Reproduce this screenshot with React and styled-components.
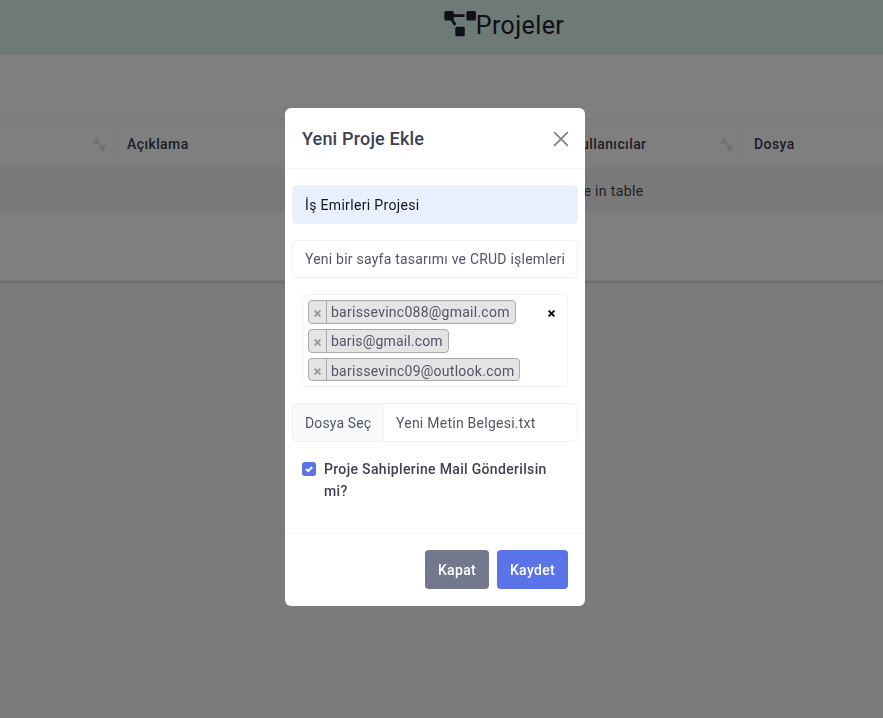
import React from 'react';
import styled, { createGlobalStyle } from 'styled-components';

const GlobalStyle = createGlobalStyle`
  *, *::before, *::after { box-sizing: border-box; }
  body {
    margin: 0;
    overflow: hidden;
    background: #f5f7fb;
    color: #3e4152;
    font: 400 14px/21px Roboto, "Noto Sans", sans-serif;
    letter-spacing: 0.3px;
  }
`;

const Page = styled.div`
  height: 718px;
  overflow: hidden;
`;

const TopBar = styled.header`
  display: flex;
  justify-content: center;
  height: 55px;
  padding: 10px 0 0 125px;
  background: #dbf5ea;
  color: #212130;
`;

const Brand = styled.h1`
  display: flex;
  align-items: flex-start;
  margin: 0;
  font-size: 25px;
  font-weight: 400;
  line-height: 31px;
  letter-spacing: 0.4px;
  white-space: nowrap;
  svg { display: block; margin-top: 1px; }
`;

const Card = styled.section`
  height: 226px;
  padding-top: 64px;
  background: #fff;
  border-bottom: 1px solid #eceef2;
  box-shadow: 0 3px 3px -1px rgba(40, 45, 60, 0.2);
`;

const TableHead = styled.div`
  display: grid;
  grid-template-columns: 115px 445px 182px 1fr;
  height: 48px;
  border-top: 2px solid #f5f5f5;
`;

const HeadCell = styled.div`
  display: flex;
  align-items: center;
  justify-content: space-between;
  padding: 1px 7px 0 12px;
  border-right: ${(p) => (p.$last ? 'none' : '1px solid #f5f5f5')};
  color: #3b3c50;
  font-weight: 500;
  letter-spacing: 0.4px;
`;

const SortMark = styled.svg`
  display: block;
  margin-left: auto;
`;

const EmptyRow = styled.div`
  display: flex;
  align-items: center;
  justify-content: center;
  height: 46px;
  padding: 3px 0 0 238px;
  background: #f2f2f2;
  letter-spacing: 0.36px;
`;

const Overlay = styled.div`
  position: fixed;
  inset: 0;
  display: flex;
  justify-content: center;
  align-items: flex-start;
  padding: 108px 13px 0 0;
  background: rgba(0, 0, 0, 0.5);
`;

const Dialog = styled.div`
  display: flex;
  flex-direction: column;
  width: 300px;
  height: 498px;
  background: #fff;
  border-radius: 6px;
`;

const DialogHeader = styled.div`
  display: flex;
  align-items: center;
  justify-content: space-between;
  height: 61px;
  padding: 2px 16px 0 17px;
  border-bottom: 1px solid #f4f4f6;
`;

const DialogTitle = styled.h2`
  margin: 0;
  font-size: 18px;
  line-height: 24px;
  font-weight: 500;
  letter-spacing: 0.18px;
`;

const CloseButton = styled.button`
  display: flex;
  padding: 0;
  border: 0;
  background: none;
`;

const DialogBody = styled.div`
  display: flex;
  flex: 1;
  flex-direction: column;
  gap: 16px;
  padding: 16px 7px 0;
`;

const Field = styled.div`
  display: flex;
  align-items: center;
  height: ${(p) => p.$height}px;
  padding: ${(p) => (p.$filled ? '1px' : '0')} 0 0 12px;
  border: 1px solid #f2f2f5;
  border-radius: 4px;
  background: ${(p) => (p.$filled ? '#e8f0fe' : '#fff')};
  color: ${(p) => (p.$filled ? '#15161c' : '#525568')};
  letter-spacing: ${(p) => (p.$filled ? 0.33 : 0.22)}px;
  white-space: nowrap;
`;

const MultiSelect = styled.div`
  display: flex;
  justify-content: space-between;
  height: 93px;
  margin: 0 10px;
  padding: 5px 12px 5px 5px;
  border: 1px solid #f2f2f5;
  border-radius: 4px;
`;

const TagList = styled.div`
  display: flex;
  flex-direction: column;
  align-items: flex-start;
  gap: 5px;
`;

const Tag = styled.div`
  display: flex;
  width: ${(p) => p.$width}px;
  height: 24px;
  border: 1px solid #aaa;
  border-radius: 4px;
  background: #e4e4e4;
  color: #525568;
  line-height: 23px;
  letter-spacing: ${(p) => p.$tracking}px;
  overflow: hidden;
  &:last-child { height: 23px; line-height: 24px; }
`;

const TagRemove = styled.span`
  display: flex;
  align-items: center;
  justify-content: center;
  width: 18px;
  margin-right: 4px;
  padding-top: 3px;
  border-right: 1px solid #aaa;
`;

const ClearAll = styled.span`
  margin-top: 10px;
  svg { display: block; }
`;

const FileField = styled.div`
  display: flex;
  height: 39px;
  border: 1px solid #f2f2f5;
  border-radius: 4px;
  overflow: hidden;
  line-height: 39px;
  color: #525568;
`;

const FileButton = styled.span`
  width: 91px;
  padding-left: 12px;
  background: #f8f9fb;
  border-right: 1px solid #f2f2f5;
  letter-spacing: 0.12px;
`;

const FileName = styled.span`
  padding-left: 12px;
  letter-spacing: 0.25px;
`;

const CheckRow = styled.label`
  display: flex;
  gap: 8px;
  padding-left: 10px;
  font-weight: 500;
  line-height: 22px;
  letter-spacing: 0.33px;
`;

const CheckBox = styled.span`
  flex: none;
  width: 14px;
  height: 14px;
  margin-top: 4px;
  border-radius: 3px;
  background: #5b73e8;
  svg { display: block; }
`;

const CheckText = styled.span`
  width: 232px;
`;

const DialogFooter = styled.div`
  display: flex;
  justify-content: flex-end;
  gap: 8px;
  height: 73px;
  padding: 16px 17px;
  border-top: 1px solid #f4f4f6;
`;

const Button = styled.button`
  width: ${(p) => (p.$primary ? 71 : 64)}px;
  height: 39px;
  padding: 2px 0 0;
  border: 0;
  border-radius: 4px;
  background: ${(p) => (p.$primary ? '#5b73e8' : '#74788d')};
  color: #fff;
  font: 500 14px/21px Roboto, sans-serif;
  letter-spacing: 0.35px;
`;

const DiagramIcon = () => (
  <svg width="32" height="26" viewBox="0 0 32 26" fill="currentColor">
    <rect x="0.3" y="0" width="9.5" height="9.5" rx="1.5" />
    <rect x="22.4" y="0" width="9.5" height="9.5" rx="1.5" />
    <rect x="11.3" y="15.8" width="9.5" height="9.5" rx="1.5" />
    <path d="M7 4.7h13.6M6.5 6.5l4.8 7.6" fill="none" stroke="currentColor" strokeWidth="2.8" />
  </svg>
);

const Sort = () => (
  <SortMark width="14" height="17" viewBox="0 0 14 17" fill="#e4e4e5">
    <path d="M0 8 4 0l4 8z" />
    <path d="M5.6 9h8.2l-4.1 7.6z" />
  </SortMark>
);

const Cross = ({ color }) => (
  <svg width="7" height="7" viewBox="0 0 7 7" fill="none" stroke={color} strokeWidth="1.8">
    <path d="M.6.6l5.8 5.8M6.4.6.6 6.4" />
  </svg>
);

const people = [
  { mail: 'barissevinc088@gmail.com', width: 208, tracking: 0.25 },
  { mail: 'baris@gmail.com', width: 141, tracking: 0.17 },
  { mail: 'barissevinc09@outlook.com', width: 212, tracking: 0.26 },
];

export default function App() {
  return (
    <Page>
      <GlobalStyle />
      <TopBar>
        <Brand><DiagramIcon />Projeler</Brand>
      </TopBar>
      <Card>
        <TableHead>
          <HeadCell><Sort /></HeadCell>
          <HeadCell>Açıklama<Sort /></HeadCell>
          <HeadCell>Kullanıcılar<Sort /></HeadCell>
          <HeadCell $last>Dosya</HeadCell>
        </TableHead>
        <EmptyRow>No data available in table</EmptyRow>
      </Card>
      <Overlay>
        <Dialog role="dialog">
          <DialogHeader>
            <DialogTitle>Yeni Proje Ekle</DialogTitle>
            <CloseButton aria-label="Kapat">
              <svg width="16" height="16" viewBox="0 0 16 16" fill="none" stroke="#808080" strokeWidth="1.7" strokeLinecap="round">
                <path d="M1.6 1.6l12.8 12.8M14.4 1.6L1.6 14.4" />
              </svg>
            </CloseButton>
          </DialogHeader>
          <DialogBody>
            <Field $filled $height={39}>İş Emirleri Projesi</Field>
            <Field $height={38}>Yeni bir sayfa tasarımı ve CRUD işlemleri</Field>
            <MultiSelect>
              <TagList>
                {people.map((p) => (
                  <Tag key={p.mail} $width={p.width} $tracking={p.tracking}>
                    <TagRemove><Cross color="#999" /></TagRemove>
                    {p.mail}
                  </Tag>
                ))}
              </TagList>
              <ClearAll><Cross color="#000" /></ClearAll>
            </MultiSelect>
            <FileField>
              <FileButton>Dosya Seç</FileButton>
              <FileName>Yeni Metin Belgesi.txt</FileName>
            </FileField>
            <CheckRow>
              <CheckBox>
                <svg width="14" height="14" viewBox="0 0 14 14" fill="none" stroke="#fff" strokeWidth="2">
                  <path d="M4 7l2.2 2.2L10.3 5" />
                </svg>
              </CheckBox>
              <CheckText>Proje Sahiplerine Mail Gönderilsin mi?</CheckText>
            </CheckRow>
          </DialogBody>
          <DialogFooter>
            <Button>Kapat</Button>
            <Button $primary>Kaydet</Button>
          </DialogFooter>
        </Dialog>
      </Overlay>
    </Page>
  );
}
